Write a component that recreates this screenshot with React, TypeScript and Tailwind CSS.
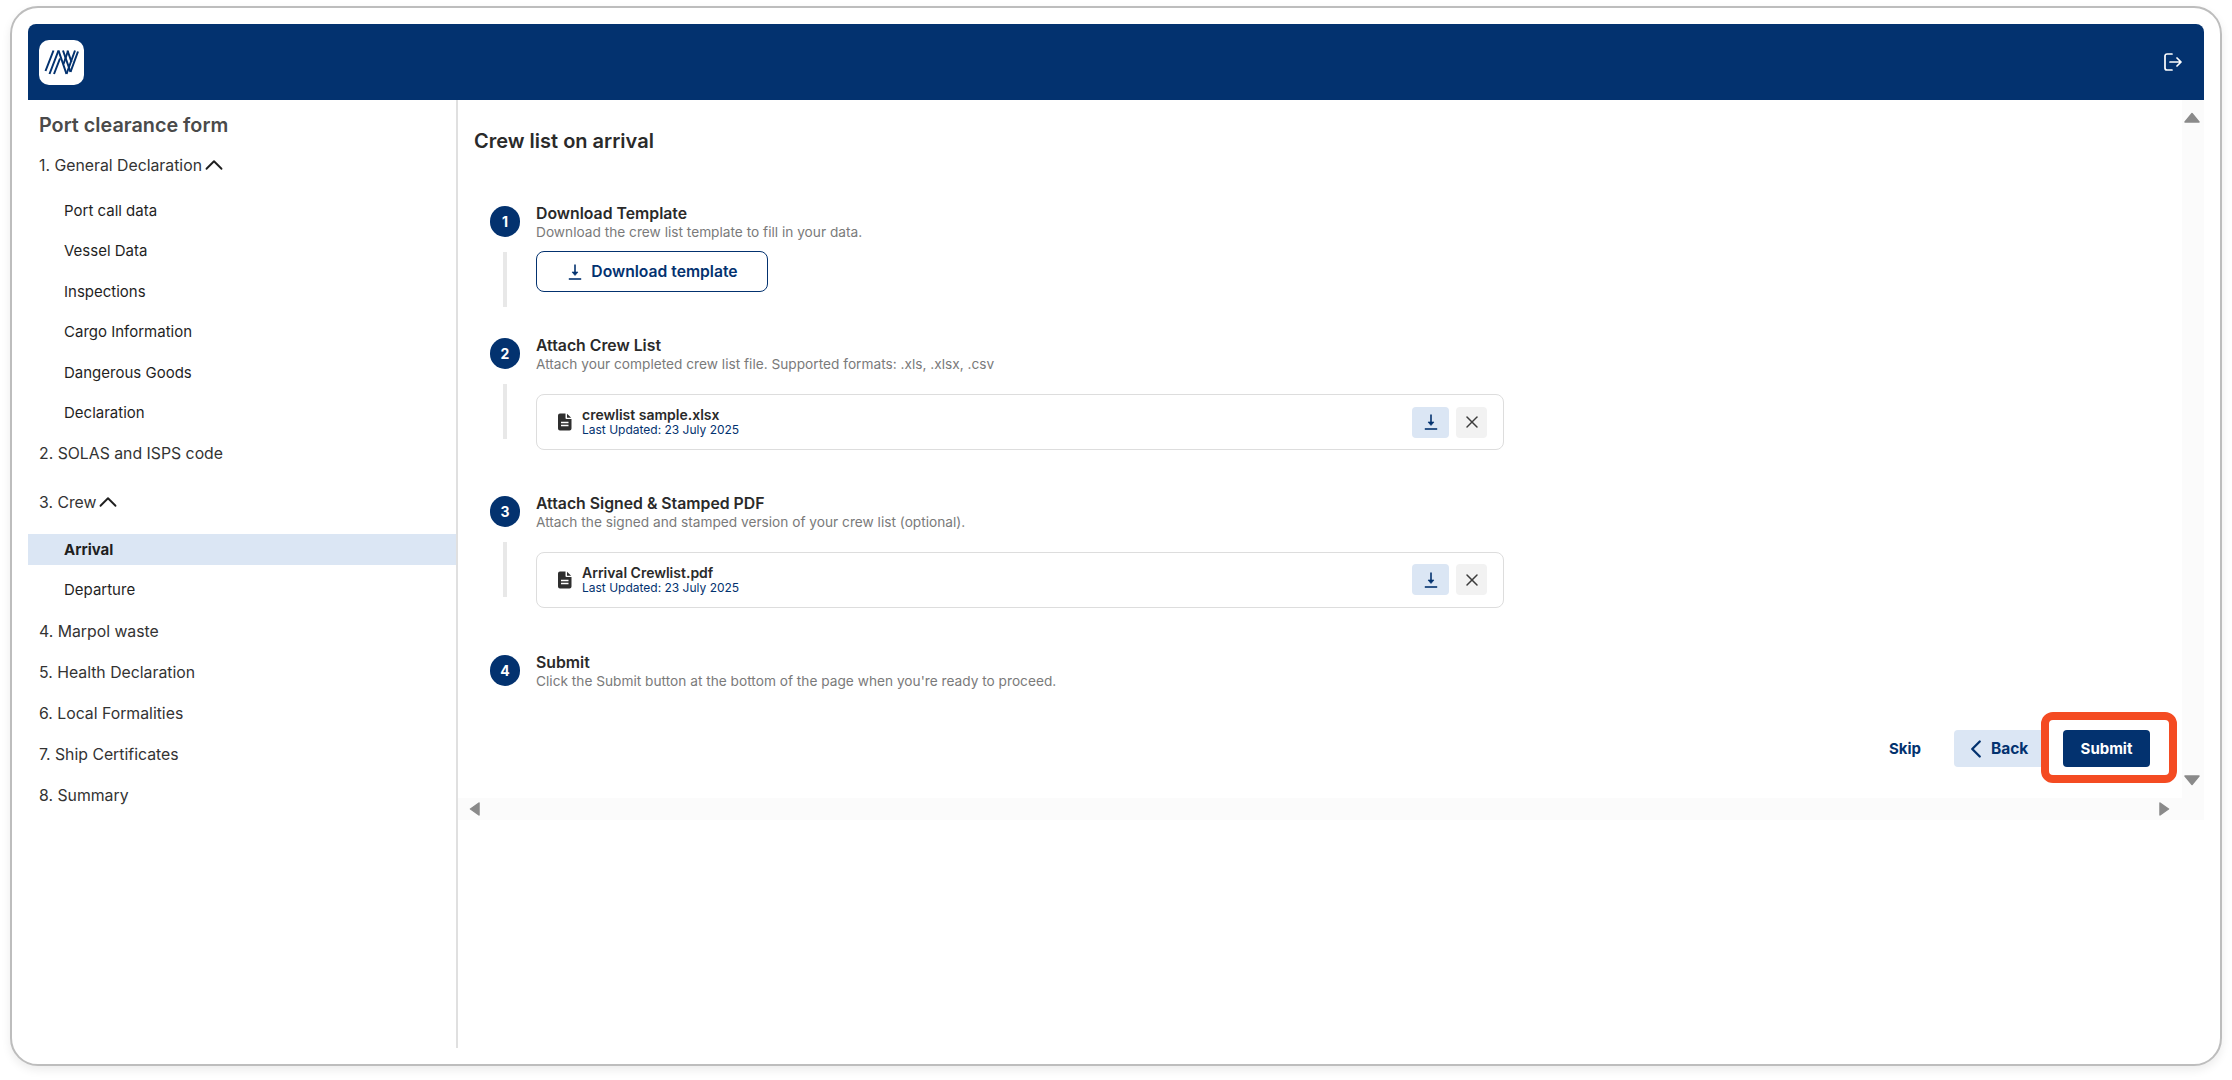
import { ChevronLeft, ChevronUp, X } from 'lucide-react';
import type { ReactNode } from 'react';

const generalItems = ['Port call data', 'Vessel Data', 'Inspections', 'Cargo Information', 'Dangerous Goods', 'Declaration'];
const lowerItems = ['4. Marpol waste', '5. Health Declaration', '6. Local Formalities', '7. Ship Certificates', '8. Summary'];

function Logo() {
  return (
    <div className="flex h-[45px] w-[45px] items-center justify-center rounded-[10px] bg-white">
      <svg width="45" height="45" viewBox="0 0 45 45" fill="none" stroke="#03326f" strokeWidth="2">
        <path d="M6.5 31 L14.5 10.5 M10.5 34 L19.5 10.5 M15 34 L21 18.5" />
        <path d="M19.5 10.5 L27.5 34 M24 10.5 L31.5 32 M28.5 10.5 L32.5 22" />
        <path d="M27.5 34 L36 10.5 M31.5 32 L39 11.5 M24.5 24 L29 11" />
      </svg>
    </div>
  );
}

function LogoutIcon() {
  return (
    <svg width="18" height="18" viewBox="0 0 18 18" fill="none" stroke="#fff" strokeWidth="1.7" strokeLinecap="round" strokeLinejoin="round">
      <path d="M8 1 H3 a2 2 0 0 0-2 2 V15 a2 2 0 0 0 2 2 H8" />
      <path d="M6 9 H16.8 M13 5 L17 9 L13 13" />
    </svg>
  );
}

function DownloadIcon({ size = 18 }: { size?: number }) {
  return (
    <svg width={size} height={size} viewBox="0 0 18 18" fill="none" stroke="#03326f" strokeWidth="1.6">
      <path d="M9 1.5 V11" />
      <path d="M6 9 L9 12.5 L12 9 Z" fill="#03326f" strokeWidth="0.6" />
      <path d="M2.8 16 H15.2" />
    </svg>
  );
}

function FileIcon() {
  return (
    <svg width="14" height="18" viewBox="0 0 14 18">
      <path d="M2 .5 H7.5 V5 a1 1 0 0 0 1 1 H13.5 V15.5 a2 2 0 0 1-2 2 H2 a2 2 0 0 1-2-2 V2.5 a2 2 0 0 1 2-2 Z" fill="#2f2f2f" />
      <path d="M9 .8 L13.2 4.8 H9 Z" fill="#2f2f2f" />
      <path d="M3 9.5 H10.5 M3 12.5 H10.5" stroke="#fff" strokeWidth="1.3" />
    </svg>
  );
}

function Arrow({ dir }: { dir: 'up' | 'down' | 'left' | 'right' }) {
  const points = {
    up: '8,1.5 15,10 1,10',
    down: '1,1 15,1 8,9.5',
    left: '1.5,7 10,1 10,13',
    right: '1,1 1,13 9.5,7',
  }[dir];
  const vertical = dir === 'up' || dir === 'down';
  return (
    <svg width={vertical ? 16 : 11} height={vertical ? 11 : 14} viewBox={vertical ? '0 0 16 11' : '0 0 11 14'}>
      <polygon points={points} fill="#8a8a8a" stroke="#8a8a8a" strokeWidth="1.5" strokeLinejoin="round" />
    </svg>
  );
}

function SectionRow({ label, open }: { label: string; open?: boolean }) {
  return (
    <div className="flex h-[41px] items-center pl-[11px] pt-[3px] text-[15.8px] text-[#333333]">
      <span>{label}</span>
      {open && <ChevronUp size={30} strokeWidth={1.5} className="-ml-[3px] -mt-[2px] text-[#1f1f1f]" />}
    </div>
  );
}

function SubRow({ label, active }: { label: string; active?: boolean }) {
  return (
    <div className={`flex h-[31px] items-center pl-[36px] pt-[2px] text-[15px] text-[#1f1f1f] ${active ? 'bg-[#dbe6f4] font-bold' : ''}`}>
      {label}
    </div>
  );
}

function Step({ n, title, desc, h, children }: { n: number; title: string; desc: string; h: string; children?: ReactNode }) {
  return (
    <div className={`flex ${h}`}>
      <div className="flex w-[62px] shrink-0 flex-col pl-[16px]">
        <div className="flex h-[31px] w-[30px] items-center justify-center rounded-full bg-[#03326f] text-[14px] font-bold text-white">{n}</div>
        {children && <div className="ml-[13px] mt-[15px] h-[55px] w-[4px] bg-[#e8e8e8]" />}
      </div>
      <div className="flex-1">
        <div className="mt-[-1px] h-[18px] text-[15.8px] leading-[17px] font-semibold text-[#2a2a2a]">{title}</div>
        <div className="h-[18px] text-[13.7px] leading-[18px] text-[#7a7a7a]">{desc}</div>
        {children}
      </div>
    </div>
  );
}

function FileCard({ name }: { name: string }) {
  return (
    <div className="mt-[21px] flex h-[56px] w-[968px] items-center justify-between rounded-[8px] border border-[#dddddd] pl-[21px] pr-[16px]">
      <div className="flex items-center gap-[10px]">
        <FileIcon />
        <div>
          <div className="text-[14px] leading-[15px] font-semibold text-[#2a2a2a]">{name}</div>
          <div className="text-[12px] leading-[15px] text-[#03326f]">Last Updated: 23 July 2025</div>
        </div>
      </div>
      <div className="flex gap-[7px]">
        <div className="flex h-[31px] w-[37px] items-center justify-center rounded-[4px] bg-[#dbe6f4]"><DownloadIcon /></div>
        <div className="flex h-[31px] w-[31px] items-center justify-center rounded-[4px] bg-[#f2f2f2]"><X size={20} strokeWidth={1.8} className="text-[#3c3c3c]" /></div>
      </div>
    </div>
  );
}

export default function App() {
  return (
    <div className="h-[1080px] w-[2232px] overflow-hidden bg-white pl-[10px] pt-[6px] font-['Inter',sans-serif]">
      <div className="flex h-[1060px] w-[2212px] flex-col rounded-[28px] border-2 border-[#bdbdbd] bg-white p-[16px] shadow-[0_4px_10px_rgba(0,0,0,0.08)]">
        <header className="flex h-[76px] shrink-0 items-center justify-between rounded-t-[8px] bg-[#03326f] pl-[11px] pr-[22px]">
          <Logo />
          <LogoutIcon />
        </header>
        <div className="flex flex-1">
          <aside className="w-[430px] shrink-0 border-r-2 border-[#e0e0e0]">
            <div className="ml-[11px] mt-[6px] flex h-[40px] items-center text-[19.8px] font-semibold text-[#4a4a4a]">Port clearance form</div>
            <div className="-mt-[2.5px]"><SectionRow label="1. General Declaration" open /></div>
            <div className="mt-[10px] flex flex-col gap-[9.5px]">
              {generalItems.map((item) => <SubRow key={item} label={item} />)}
            </div>
            <div className="mt-[3.5px]"><SectionRow label="2. SOLAS and ISPS code" /></div>
            <div className="mt-[8px]"><SectionRow label="3. Crew" open /></div>
            <div className="mt-[12px] flex flex-col gap-[9.5px]">
              <SubRow label="Arrival" active />
              <SubRow label="Departure" />
            </div>
            <div className="mt-[5px]">
              {lowerItems.map((item) => <SectionRow key={item} label={item} />)}
            </div>
          </aside>
          <main className="flex-1">
            <div className="grid h-[720px] grid-cols-[1fr_22px] grid-rows-[698px_22px]">
              <div className="pl-[16px] pr-[32px] pt-[27px]">
                <h1 className="h-[28px] text-[20px] leading-[28px] font-semibold text-[#2a2a2a]">Crew list on arrival</h1>
                <div className="mt-[51px]">
                  <Step n={1} title="Download Template" desc="Download the crew list template to fill in your data." h="h-[132px]">
                    <div className="mt-[10px] flex h-[41px] w-[232px] items-center justify-center gap-[7px] rounded-[8px] border border-[#03326f] text-[15.7px] font-semibold text-[#03326f]">
                      <DownloadIcon size={18} />
                      Download template
                    </div>
                  </Step>
                  <Step n={2} title="Attach Crew List" desc="Attach your completed crew list file. Supported formats: .xls, .xlsx, .csv" h="h-[157.5px]">
                    <FileCard name="crewlist sample.xlsx" />
                  </Step>
                  <Step n={3} title="Attach Signed & Stamped PDF" desc="Attach the signed and stamped version of your crew list (optional)." h="h-[159px]">
                    <FileCard name="Arrival Crewlist.pdf" />
                  </Step>
                  <Step n={4} title="Submit" desc="Click the Submit button at the bottom of the page when you're ready to proceed." h="h-[75.5px]" />
                </div>
                <div className="flex h-[37px] items-center justify-end text-[15px] font-bold">
                  <span className="mr-[33px] pt-[1px] text-[#03326f]">Skip</span>
                  <div className="mr-[18px] flex h-[37px] w-[91px] items-center rounded-[4px] bg-[#dbe6f4] pl-[7px] pt-[1px] text-[#03326f]">
                    <ChevronLeft size={30} strokeWidth={1.9} />
                    <span className="text-[15.5px]">Back</span>
                  </div>
                  <div className="relative flex h-[37px] w-[87px] items-center justify-center rounded-[4px] bg-[#03326f] pt-[1px] text-white">
                    Submit
                    <div className="absolute -bottom-[16px] -left-[22px] -right-[27px] -top-[18px] rounded-[12px] border-[8px] border-[#f44b22]" />
                  </div>
                </div>
              </div>
              <div className="flex flex-col items-center justify-between bg-[#fbfbfb] pb-[12px] pr-[2px] pt-[12px]">
                <Arrow dir="up" />
                <Arrow dir="down" />
              </div>
              <div className="col-span-2 flex items-center justify-between bg-[#fbfbfb] pl-[11px] pr-[34px]">
                <Arrow dir="left" />
                <Arrow dir="right" />
              </div>
            </div>
          </main>
        </div>
      </div>
    </div>
  );
}
